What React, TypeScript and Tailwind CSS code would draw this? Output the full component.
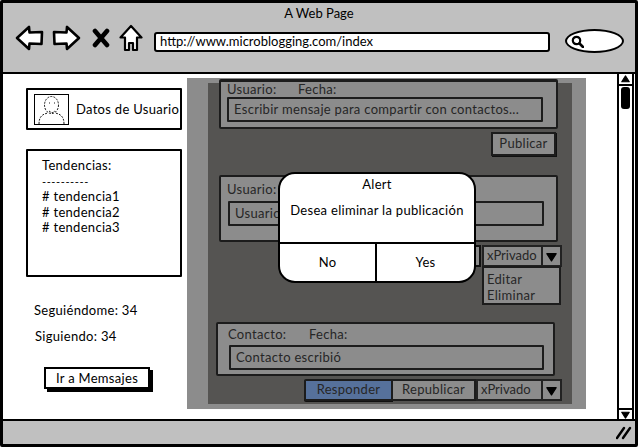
const font = { fontFamily: '"Lato", "Open Sans", sans-serif' };

function Arrow({ flip }: { flip?: boolean }) {
    return (
        <svg width="29" height="26" viewBox="0 0 29 26" className={flip ? '-scale-x-100' : ''}>
            <path
                d="M2 13 L14 2 L14.5 7.5 L27 7 L26.5 19 L14.5 18.5 L14 24 Z"
                fill="white"
                stroke="black"
                strokeWidth="2.6"
                strokeLinejoin="round"
            />
        </svg>
    );
}

function ArrowDown({ size = 10 }: { size?: number }) {
    return (
        <svg width={size} height={size} viewBox="0 0 10 10">
            <path d="M0.8 2.5 H9.2 L5 9 Z" fill="black" stroke="black" strokeWidth="1.2" strokeLinejoin="round" />
        </svg>
    );
}

function Avatar() {
    return (
        <div className="h-[31px] w-[35px] shrink-0 border border-black bg-white">
            <svg width="33" height="29" viewBox="0 0 33 29">
                <g fill="none" stroke="black" strokeWidth="0.9" strokeDasharray="2 1.2">
                    <ellipse cx="16.5" cy="10" rx="7" ry="8.5" />
                    <path d="M4 29 C4 21 8 19 13 18 M29 29 C29 21 25 19 20 18" />
                    <path d="M14 8 h1 M19 8 h1 M14 16 l3 2 l3 -2" />
                </g>
            </svg>
        </div>
    );
}

function Select({ width }: { width: string }) {
    return (
        <div className="flex h-[22px]">
            <div className={`${width} flex items-center border-2 border-[#222] bg-[#8c8c8c] pb-[1px] pl-[3px] tracking-normal`}>
                xPrivado
            </div>
            <div className="flex w-[19px] items-center justify-center border-2 border-l-0 border-[#222] bg-[#8c8c8c]">
                <ArrowDown size={11} />
            </div>
        </div>
    );
}

type PostProps = {
    author: string;
    text: string;
    className: string;
    labelClass: string;
    authorClass: string;
    inputClass: string;
};

function Post({ author, text, className, labelClass, authorClass, inputClass }: PostProps) {
    return (
        <div className={`${className} w-[339px] rounded-[2px] border-2 border-[#1c1c1c] bg-[#8c8c8c]`}>
            <div className={`${labelClass} flex items-center`}>
                <span className={authorClass}>{author}</span>
                <span>Fecha:</span>
            </div>
            <div
                className={`${inputClass} flex h-[25px] items-center rounded-[1px] border-[2.5px] border-[#1c1c1c] pb-[1px] pl-[5px]`}
            >
                {text}
            </div>
        </div>
    );
}

export default function App() {
    return (
        <div
            className="relative flex h-[447px] w-[638px] flex-col overflow-hidden rounded-[2px] border-[3px] border-black bg-white text-[13px] leading-none tracking-[0.3px] text-black"
            style={font}
        >
            {/* Browser toolbar */}
            <div className="relative h-[71px] shrink-0 border-b-[2px] border-black bg-[#c0c0c0]">
                <div className="pt-[3px] text-center text-[13px] leading-[14px] tracking-normal">A Web Page</div>
                <div className="mt-[3px] flex items-center pl-[12px]">
                    <Arrow />
                    <div className="ml-[8px]">
                        <Arrow flip />
                    </div>
                    <svg width="18" height="20" viewBox="0 0 18 20" className="ml-[11px]">
                        <path d="M3 3 L15 17 M15 3 L3 17" stroke="black" strokeWidth="4.6" strokeLinecap="round" />
                    </svg>
                    <svg width="24" height="28" viewBox="0 0 24 28" className="ml-[9px]">
                        <path
                            d="M12 2 L22.5 13.5 L18 13.5 L18 26 L14 26 L14 19 L10 19 L10 26 L6 26 L6 13.5 L1.5 13.5 Z"
                            fill="white"
                            stroke="black"
                            strokeWidth="2.2"
                            strokeLinejoin="round"
                        />
                    </svg>
                    <div className="ml-[11px] mt-[9px] flex h-[20px] w-[396px] items-center self-start rounded-[3px] border-2 border-black bg-white pb-[1px] pl-[4px] tracking-normal">
                        http://www.microblogging.com/index
                    </div>
                    <div className="ml-[15px] mt-[6px] flex h-[24px] w-[59px] items-center self-start rounded-[50%] border-2 border-black bg-white pl-[4px]">
                        <svg width="13" height="13" viewBox="0 0 13 13">
                            <circle cx="5.5" cy="5.5" r="3.7" fill="none" stroke="black" strokeWidth="2.2" />
                            <path d="M8.5 8.5 L12 12" stroke="black" strokeWidth="2.6" strokeLinecap="round" />
                        </svg>
                    </div>
                </div>
            </div>

            {/* Page content */}
            <div className="flex h-[345px] shrink-0">
                <div className="w-[184px] shrink-0 pl-[23px]">
                    <div className="mt-[14px] flex h-[42px] w-[156px] items-center whitespace-nowrap rounded-[1px] border-[2.5px] border-black pl-[6px]">
                        <Avatar />
                        <span className="ml-[7px]">Datos de Usuario</span>
                    </div>
                    <div className="mt-[19px] h-[128px] w-[156px] rounded-[1px] border-[2.5px] border-black pl-[14px] pt-[7px]">
                        <div className="leading-[15px]">Tendencias:</div>
                        <div className="mt-[2px] h-[14px] text-[11px] leading-[14px] tracking-[0.6px]">----------</div>
                        <div className="leading-[15.5px]">
                            <div># tendencia1</div>
                            <div># tendencia2</div>
                            <div># tendencia3</div>
                        </div>
                    </div>
                    <div className="ml-[8px] mt-[26px] leading-[15px]">Seguiéndome: 34</div>
                    <div className="ml-[9px] mt-[11px] leading-[15px]">Siguiendo: 34</div>
                    <div className="ml-[18px] mt-[23px] flex h-[22px] w-[106px] items-center justify-center border-2 border-black shadow-[3px_3px_0_#000]">
                        Ir a Memsajes
                    </div>
                </div>

                {/* Dimmed messages panel */}
                <div className="mt-[4px] h-[331px] w-[399px] shrink-0 bg-[#8c8c8c] pl-[21px] pt-[5px] text-[#262626]">
                    <div className="flex h-[321px] w-[364px] flex-col bg-[#555452]">
                        <Post
                            className="-mt-[4px] ml-[11px] h-[50px] border-t-[3px]"
                            labelClass="h-[15px] pl-[6px]"
                            authorClass="w-[71px]"
                            inputClass="ml-[6px] w-[316px]"
                            author="Usuario:"
                            text="Escribir mensaje para compartir con contactos..."
                        />
                        <div className="ml-[283px] mt-[3px] flex h-[24px] w-[65px] shrink-0 items-center justify-center border-2 border-[#1c1c1c] bg-[#8c8c8c] pb-[1px] shadow-[1px_1px_0_#111]">
                            Publicar
                        </div>
                        <Post
                            className="ml-[11px] mt-[19px] h-[67px]"
                            labelClass="h-[24px] pl-[6px]"
                            authorClass="w-[71px]"
                            inputClass="ml-[7px] w-[316px]"
                            author="Usuario:"
                            text="Usuario"
                        />
                        <div className="mt-[3px] flex">
                            <div className="ml-[203px] h-[22px] w-[70px] border-2 border-[#111] bg-[#8c8c8c]" />
                            <div className="ml-[1px]">
                                <Select width="w-[61px]" />
                            </div>
                        </div>
                        <div className="ml-[274px] mt-[-1px] h-[39px] w-[79px] shrink-0 border-2 border-[#1c1c1c] bg-[#8c8c8c] pl-[3px] pt-[3px] leading-[16px]">
                            <div>Editar</div>
                            <div>Eliminar</div>
                        </div>
                        <Post
                            className="ml-[8px] mt-[17px] h-[54px]"
                            labelClass="h-[21px] pl-[10px]"
                            authorClass="w-[81px]"
                            inputClass="ml-[11px] w-[315px]"
                            author="Contacto:"
                            text="Contacto escribió"
                        />
                        <div className="ml-[96px] mt-[3px] flex">
                            <div className="flex h-[22px] w-[89px] items-center justify-center rounded-l-[2px] border-2 border-[#1c1c1c] bg-[#56719b] pb-[1px] shadow-[0_1px_0_#111]">
                                Responder
                            </div>
                            <div className="flex h-[22px] w-[83px] items-center justify-center border-y-2 border-r-2 border-[#1c1c1c] bg-[#8c8c8c] pb-[1px]">
                                Republicar
                            </div>
                            <Select width="w-[67px]" />
                        </div>
                    </div>
                </div>

                {/* Scrollbar */}
                <div className="ml-[31px] flex w-[17px] shrink-0 flex-col border-x-[2px] border-black">
                    <div className="flex h-[12px] items-center justify-center border-b-2 border-black pt-[1px]">
                        <div className="rotate-180">
                            <ArrowDown size={9} />
                        </div>
                    </div>
                    <div className="ml-[2px] mt-[1px] h-[22px] w-[9px] rounded-[3px] bg-black" />
                    <div className="flex-1" />
                    <div className="flex h-[11px] items-center justify-center border-t-2 border-black">
                        <ArrowDown size={9} />
                    </div>
                </div>
            </div>

            {/* Status bar */}
            <div className="flex flex-1 items-center justify-end border-t-[2px] border-black bg-[#c0c0c0] pr-[3px]">
                <svg width="16" height="14" viewBox="0 0 16 14">
                    <path d="M1 12 L8 2 M7 12 L14 2" stroke="black" strokeWidth="2.4" strokeLinecap="round" />
                </svg>
            </div>

            {/* Alert dialog */}
            <div className="absolute left-[275px] top-[169px] flex h-[111px] w-[198px] flex-col overflow-hidden rounded-[17px] border-2 border-black bg-white">
                <div className="pt-[3px] text-center leading-[15px]">Alert</div>
                <div className="mt-[10px] flex-1 text-center leading-[16px]">Desea eliminar la publicación</div>
                <div className="flex h-[39px] border-t-2 border-black">
                    <div className="flex w-[97px] items-center justify-center border-r-2 border-black pb-[1px]">No</div>
                    <div className="flex flex-1 items-center justify-center pb-[1px]">Yes</div>
                </div>
            </div>
        </div>
    );
}
